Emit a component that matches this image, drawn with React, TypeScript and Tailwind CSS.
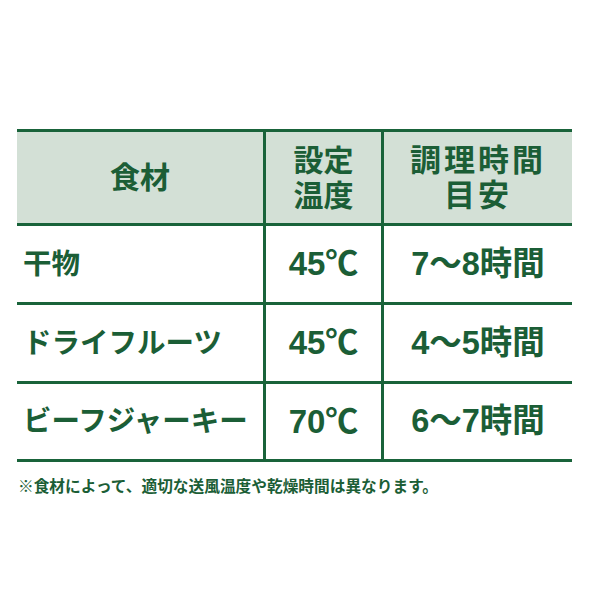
const rows = [
  { food: "干物", temp: "45℃", time: "7〜8時間", h: "h-[79px]" },
  { food: "ドライフルーツ", temp: "45℃", time: "4〜5時間", h: "h-[79px]" },
  { food: "ビーフジャーキー", temp: "70℃", time: "6〜7時間", h: "h-[75px]" },
];

export default function App() {
  return (
    <div
      className="w-[600px] h-[600px] bg-white pt-[129px] pl-[17px] text-[#1b5e36]"
      style={{ fontFamily: '"Liberation Sans", "Noto Sans CJK JP", sans-serif' }}
    >
      <div className="w-[555px] border-t-[3px] border-b-[3px] border-[#19633a]">
        <div className="grid grid-cols-[249px_118px_1fr] h-[94px] bg-[#d3e0d6] border-b-[3px] border-[#19633a] font-bold text-[30px] leading-[35px]">
          <div className="flex items-center justify-center border-r-[3px] border-[#19633a]">
            食材
          </div>
          <div className="flex flex-col items-center justify-center border-r-[3px] border-[#19633a]">
            <span>設定</span>
            <span>温度</span>
          </div>
          <div className="flex flex-col items-center justify-center text-[31px] tracking-[3px]">
            <span>調理時間</span>
            <span>目安</span>
          </div>
        </div>
        {rows.map((r, i) => (
          <div
            key={r.food}
            className={
              "grid grid-cols-[249px_118px_1fr] font-bold " +
              r.h +
              (i < rows.length - 1 ? " border-b-[3px] border-[#19633a]" : "")
            }
          >
            <div className="flex items-center pl-[6px] text-[28.5px] border-r-[3px] border-[#19633a]">
              {r.food}
            </div>
            <div className="flex items-center justify-center text-[33px] border-r-[3px] border-[#19633a]">
              {r.temp}
            </div>
            <div className="flex items-center justify-center text-[32.5px]">
              {r.time}
            </div>
          </div>
        ))}
      </div>
      <p className="mt-[15px] pl-[1px] text-[15.7px] font-bold leading-[20px]">
        ※食材によって、適切な送風温度や乾燥時間は異なります。
      </p>
    </div>
  );
}
